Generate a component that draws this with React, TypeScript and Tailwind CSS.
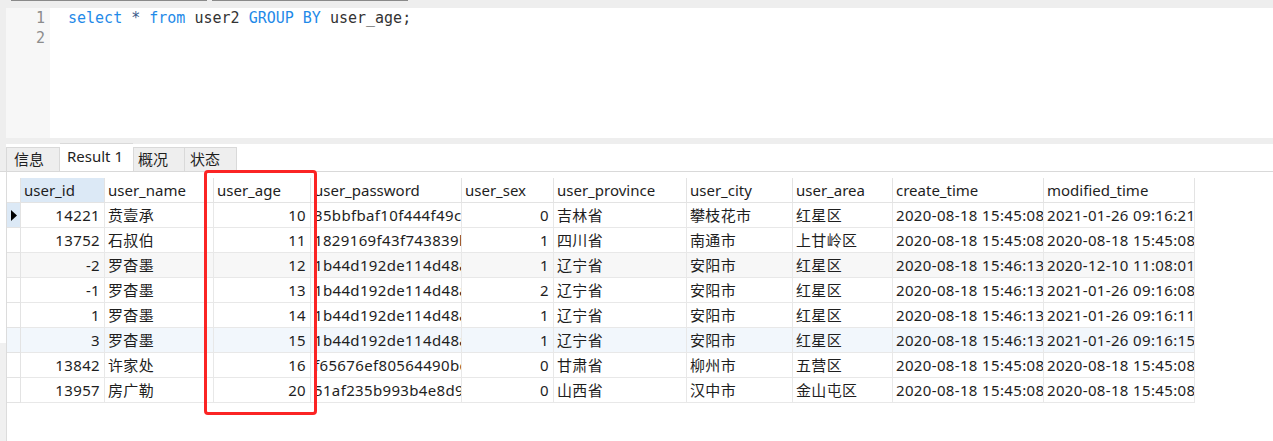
import React from "react";

const cols = [
  { key: "user_id", w: 84, right: true },
  { key: "user_name", w: 109, right: false },
  { key: "user_age", w: 97, right: true },
  { key: "user_password", w: 151, right: false },
  { key: "user_sex", w: 92, right: true },
  { key: "user_province", w: 133, right: false },
  { key: "user_city", w: 106, right: false },
  { key: "user_area", w: 100, right: false },
  { key: "create_time", w: 151, right: false },
  { key: "modified_time", w: 151, right: false },
];

const rows: string[][] = [
  ["14221", "贲壹承", "10", "35bbfbaf10f444f49c7a", "0", "吉林省", "攀枝花市", "红星区", "2020-08-18 15:45:08", "2021-01-26 09:16:21"],
  ["13752", "石叔伯", "11", "1829169f43f743839b2e", "1", "四川省", "南通市", "上甘岭区", "2020-08-18 15:45:08", "2020-08-18 15:45:08"],
  ["-2", "罗杳墨", "12", "1b44d192de114d48a8c2", "1", "辽宁省", "安阳市", "红星区", "2020-08-18 15:46:13", "2020-12-10 11:08:01"],
  ["-1", "罗杳墨", "13", "1b44d192de114d48a8c2", "2", "辽宁省", "安阳市", "红星区", "2020-08-18 15:46:13", "2021-01-26 09:16:08"],
  ["1", "罗杳墨", "14", "1b44d192de114d48a8c2", "1", "辽宁省", "安阳市", "红星区", "2020-08-18 15:46:13", "2021-01-26 09:16:11"],
  ["3", "罗杳墨", "15", "1b44d192de114d48a8c2", "1", "辽宁省", "安阳市", "红星区", "2020-08-18 15:46:13", "2021-01-26 09:16:15"],
  ["13842", "许家处", "16", "f65676ef80564490bc31", "0", "甘肃省", "柳州市", "五营区", "2020-08-18 15:45:08", "2020-08-18 15:45:08"],
  ["13957", "房广勒", "20", "51af235b993b4e8d9e02", "0", "山西省", "汉中市", "金山屯区", "2020-08-18 15:45:08", "2020-08-18 15:45:08"],
];

const rowBg = (i: number) =>
  i === 2 ? "bg-[#f7f7f7]" : i === 5 ? "bg-[#f2f7fc]" : "bg-white";

export default function App() {
  return (
    <div
      className="w-[1273px] h-[441px] bg-white relative overflow-hidden text-[#1e1e1e]"
      style={{ fontFamily: '"Noto Sans", "Noto Sans CJK SC", sans-serif' }}
    >
      {/* top strip */}
      <div className="h-[8px] bg-[#eeeeee] flex">
        <div className="ml-[11px] w-[196px] h-[1px] bg-[#8a8a8a]" />
        <div className="ml-[5px] w-[196px] h-[1px] bg-[#8a8a8a]" />
      </div>

      {/* editor */}
      <div className="h-[130px] flex">
        <div className="w-[6px] bg-[#eeeeee]" />
        <div
          className="w-[44px] bg-[#f7f7f7] flex flex-col items-end pr-[5px] text-[15px] leading-[20px] text-[#8c8c8c]"
          style={{ fontFamily: '"DejaVu Sans Mono", monospace' }}
        >
          <div>1</div>
          <div>2</div>
        </div>
        <div
          className="flex-1 pl-[18px] text-[15px] leading-[20px] text-[#333333] whitespace-pre"
          style={{ fontFamily: '"DejaVu Sans Mono", monospace' }}
        >
          <span className="text-[#1f8ae8]">select</span>
          <span> </span>
          <span className="text-[#3a5a8a]">*</span>
          <span> </span>
          <span className="text-[#1f8ae8]">from</span>
          <span> user2 </span>
          <span className="text-[#1f8ae8]">GROUP BY</span>
          <span> user_age;</span>
        </div>
      </div>

      {/* gap */}
      <div className="h-[6px] bg-[#eeeeee]" />

      {/* tab bar */}
      <div className="h-[28px] flex items-end border-b border-[#d9d9d9]">
        <div className="w-[6px] h-full bg-[#eeeeee]" />
        <div className="w-[54px] h-[24px] bg-[#eeeeee] border border-b-0 border-[#d9d9d9] text-[15px] leading-[23px] pl-[7px]">
          信息
        </div>
        <div className="w-[73px] h-[28px] bg-white border-t border-[#d9d9d9] text-[15px] leading-[24px] pl-[7px]">
          Result 1
        </div>
        <div className="w-[52px] h-[24px] bg-[#eeeeee] border border-b-0 border-[#d9d9d9] text-[15px] leading-[23px] pl-[4px]">
          概况
        </div>
        <div className="w-[52px] h-[24px] bg-[#eeeeee] border border-l-0 border-b-0 border-[#d9d9d9] text-[15px] leading-[23px] pl-[5px]">
          状态
        </div>
      </div>

      {/* grid area */}
      <div className="flex h-[269px]">
        <div className="w-[7px] flex flex-col border-r border-[#dcdcdc]">
          <div className="flex-1 bg-white" />
          <div className="h-[98px] bg-[#f0f0f0]" />
        </div>
        <div className="pt-[6px] text-[15px]">
          {/* header */}
          <div className="flex h-[25px]">
            <div className="w-[14px] border-r border-b border-[#e3e3e3] bg-white" />
            {cols.map((c, i) => (
              <div
                key={c.key}
                className={`border-r border-b border-[#e3e3e3] pl-[3px] leading-[24px] whitespace-nowrap overflow-hidden ${
                  i === 0 ? "bg-[#dce9f6]" : "bg-white"
                }`}
                style={{ width: c.w }}
              >
                {c.key}
              </div>
            ))}
          </div>
          {rows.map((r, ri) => (
            <div key={ri} className={`flex h-[25px] ${rowBg(ri)}`}>
              <div
                className={`w-[14px] border-r border-b border-[#e3e3e3] flex items-center justify-center ${
                  ri === 0 ? "bg-[#dce9f6]" : ""
                }`}
              >
                {ri === 0 && (
                  <svg width="6" height="11" viewBox="0 0 6 11">
                    <path d="M0 0 L6 5.5 L0 11 Z" fill="#000" />
                  </svg>
                )}
              </div>
              {cols.map((c, ci) => (
                <div
                  key={c.key}
                  className={`border-r border-b border-[#e8e8e8] leading-[24px] tracking-[0.35px] whitespace-nowrap overflow-hidden ${
                    c.right ? "text-right pr-[4px]" : "pl-[3px]"
                  }`}
                  style={{ width: c.w }}
                >
                  {r[ci]}
                </div>
              ))}
            </div>
          ))}
        </div>
      </div>

      {/* red highlight box */}
      <div className="absolute left-[204px] top-[170px] w-[113px] h-[245px] border-[3px] border-[#fb2424] rounded-[4px]" />
    </div>
  );
}
